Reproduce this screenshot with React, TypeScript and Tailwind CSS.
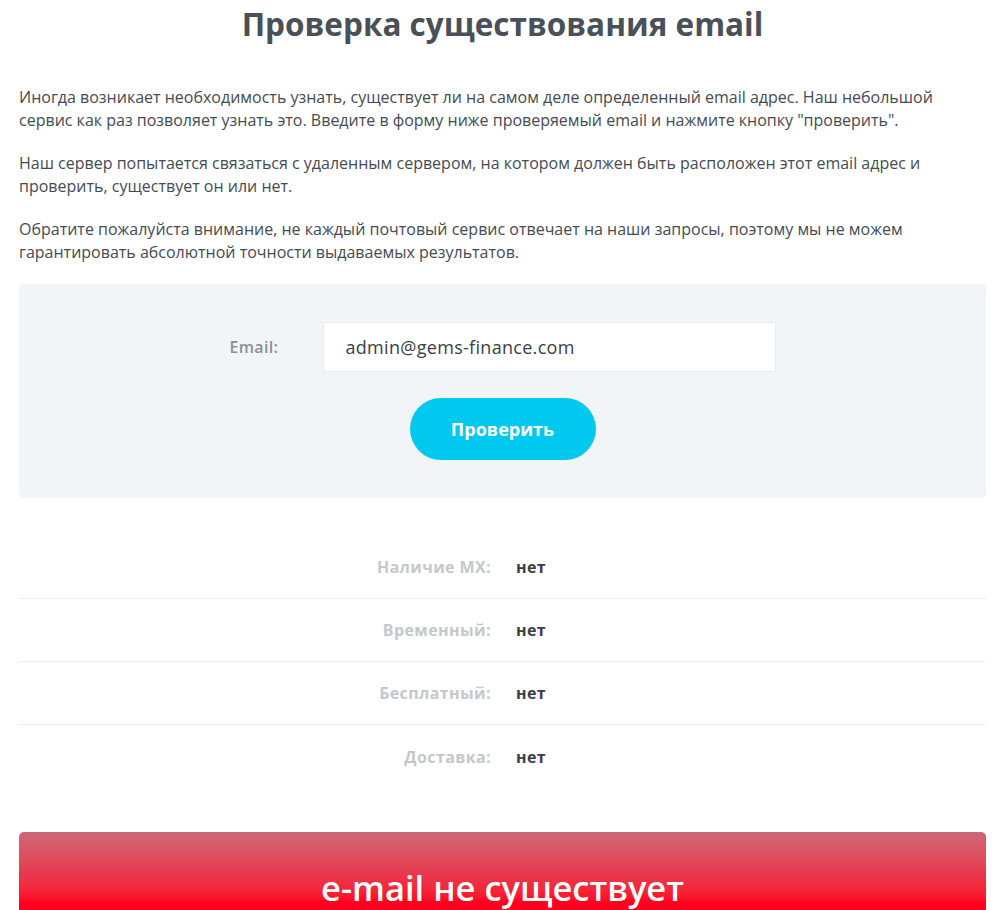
export default function App() {
  const rows = [
    { label: 'Наличие MX:', value: 'нет' },
    { label: 'Временный:', value: 'нет' },
    { label: 'Бесплатный:', value: 'нет' },
    { label: 'Доставка:', value: 'нет' },
  ];

  return (
    <div className="h-[910px] overflow-hidden bg-white pl-[19px] pr-[13px] text-[#454b52]" style={{ fontFamily: '"Open Sans", "Noto Sans", sans-serif' }}>
      {/* Title */}
      <h1 className="pt-[4px] text-center text-[31.5px] leading-[40px] font-bold text-[#4a5057]">
        Проверка существования email
      </h1>

      {/* Intro text */}
      <div className="mt-[42px] space-y-[20px] text-[16px] leading-[23px] font-medium">
        <p>
          Иногда возникает необходимость узнать, существует ли на самом деле определенный email адрес. Наш небольшой
          <br />
          сервис как раз позволяет узнать это. Введите в форму ниже проверяемый email и нажмите кнопку "проверить".
        </p>
        <p>
          Наш сервер попытается связаться с удаленным сервером, на котором должен быть расположен этот email адрес и
          <br />
          проверить, существует он или нет.
        </p>
        <p>
          Обратите пожалуйста внимание, не каждый почтовый сервис отвечает на наши запросы, поэтому мы не можем
          <br />
          гарантировать абсолютной точности выдаваемых результатов.
        </p>
      </div>

      {/* Form */}
      <div className="mt-[20px] flex h-[214px] flex-col items-center rounded-[5px] bg-[#f2f5f7] pt-[38px]">
        <div className="flex items-center">
          <label className="w-[93px] text-[16px] font-semibold tracking-[0.3px] text-[#8a9096]">Email:</label>
          <div className="flex h-[50px] w-[453px] items-center border border-[#e8ecef] bg-white pl-[22px] text-[18px] font-medium tracking-[0.3px] text-[#3a3f44]">
            admin@gems-finance.com
          </div>
        </div>
        <button className="mt-[26px] h-[62px] w-[186px] rounded-full bg-[#00c8ef] text-[18px] font-bold text-white">
          Проверить
        </button>
      </div>

      {/* Results */}
      <div className="mt-[38px]">
        {rows.map((row, i) => (
          <div
            key={row.label}
            className={`flex h-[63px] items-center text-[16px] font-bold tracking-[0.4px] ${i < rows.length - 1 ? 'border-b border-[#eceff1]' : ''}`}
          >
            <span className="w-[472px] text-right text-[#c3c8cd]">{row.label}</span>
            <span className="ml-[25px] text-[#3a3f44]">{row.value}</span>
          </div>
        ))}
      </div>

      {/* Status */}
      <div className="mt-[44px] flex h-[100px] justify-center rounded-t-[5px] bg-gradient-to-b from-[#cc6676] via-[#e63a50] via-40% to-[#ff0020] to-70% pt-[34px]">
        <span className="text-[34.5px] leading-[44px] font-semibold text-white">e-mail не существует</span>
      </div>
    </div>
  );
}
